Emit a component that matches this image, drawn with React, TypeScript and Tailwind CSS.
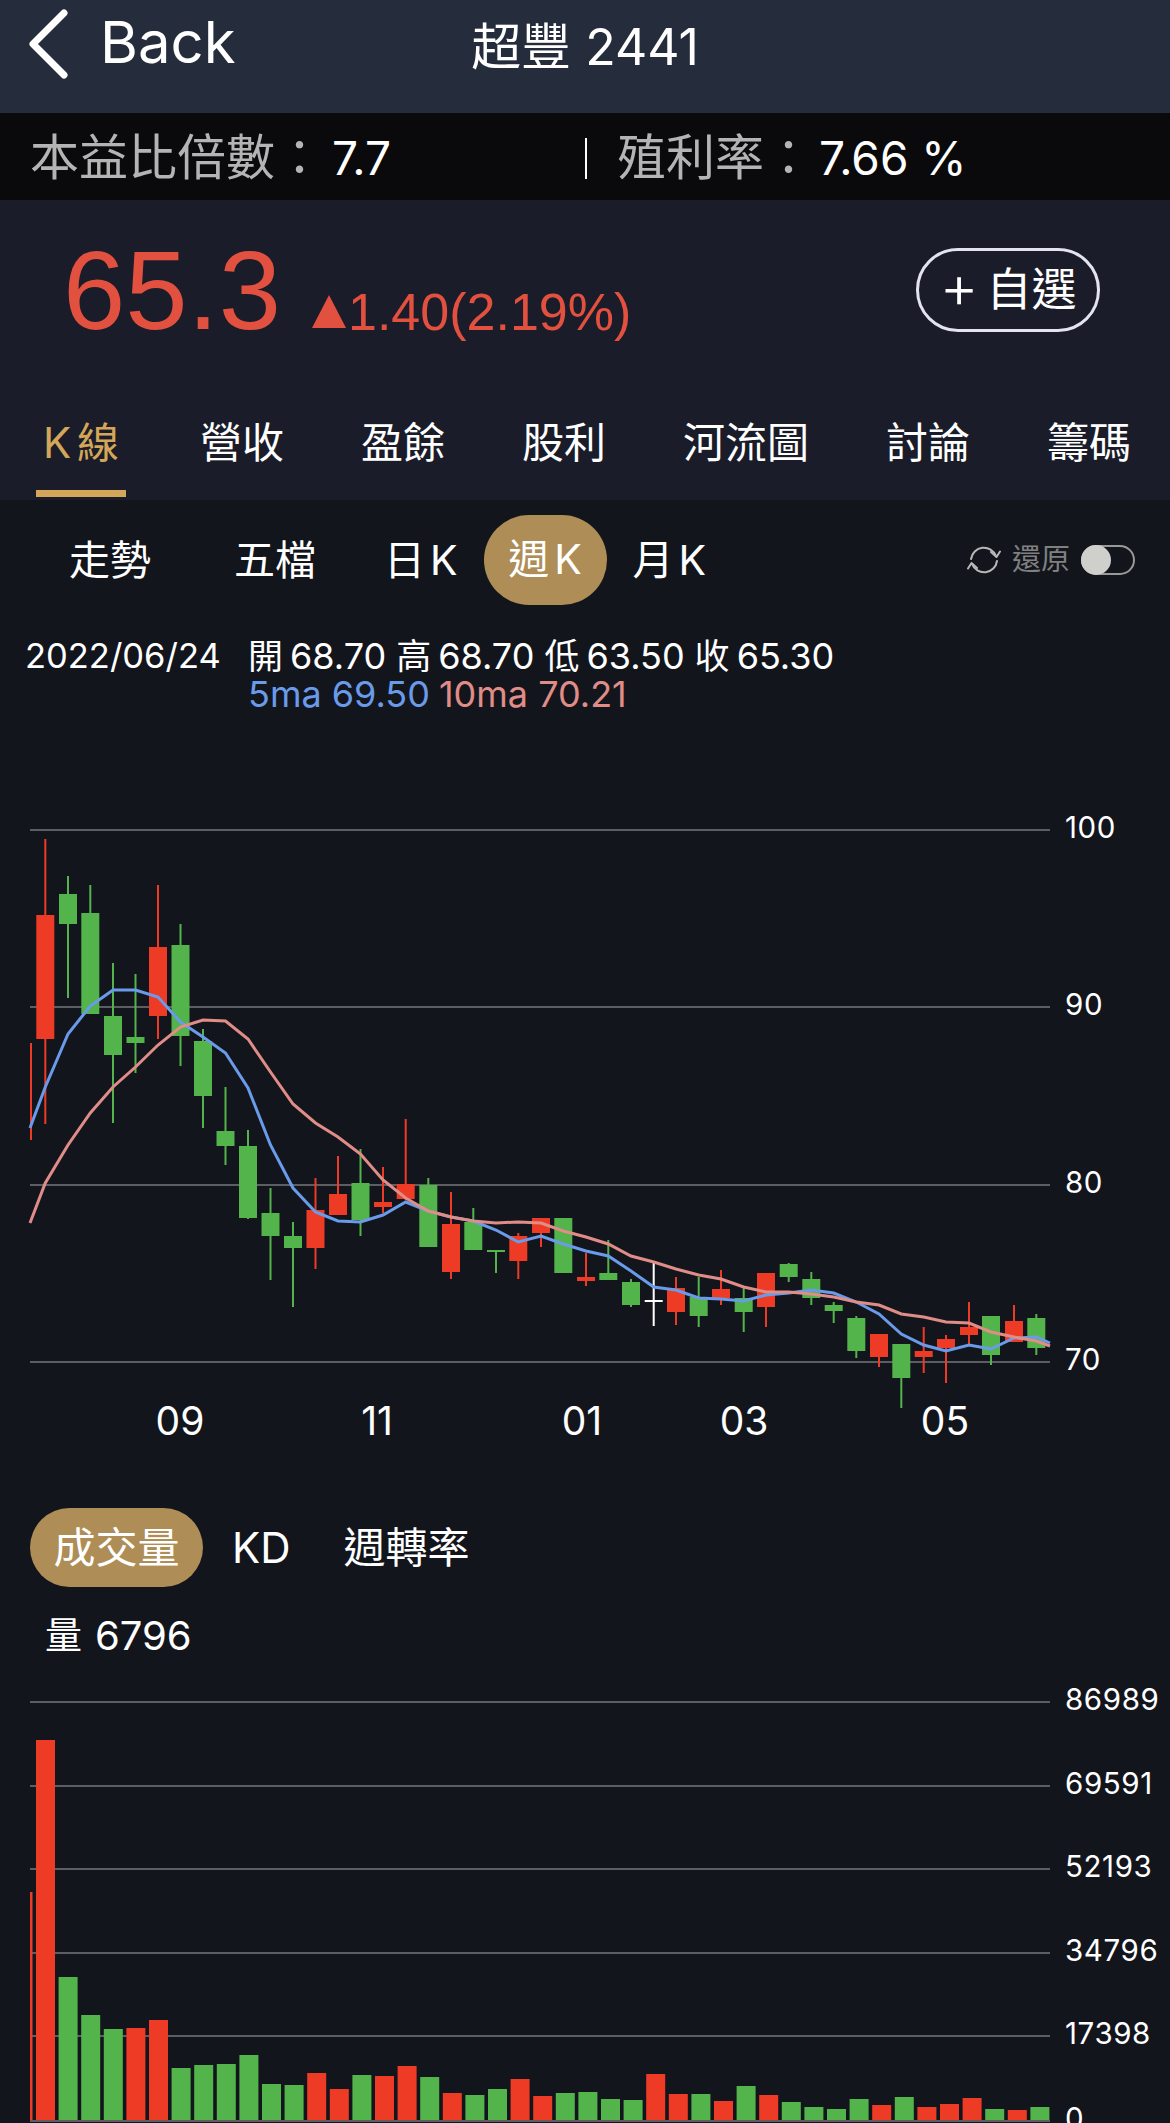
type Candle = [string, number, number, number, number, number];

const RED = '#ee3b26';
const GREEN = '#52b44b';

// color, x, wick top, wick bottom, body top, body bottom
const CANDLES: Candle[] = [
  [RED, 31, 1043, 1140, 0, 0],
  [RED, 45.3, 839, 1124, 915, 1039],
  [GREEN, 68, 876, 998, 894, 924],
  [GREEN, 90.3, 885, 1014, 913, 1014],
  [GREEN, 113, 963, 1123, 1016, 1055],
  [GREEN, 135.5, 974, 1073, 1037, 1043],
  [RED, 158, 885, 1039, 947, 1016],
  [GREEN, 180.5, 924, 1066, 945, 1036],
  [GREEN, 203, 1029, 1128, 1041, 1096],
  [GREEN, 225.5, 1087, 1165, 1131, 1146],
  [GREEN, 248, 1130, 1219, 1146, 1218],
  [GREEN, 270.5, 1188, 1280, 1213, 1236],
  [GREEN, 293, 1222, 1307, 1236, 1248],
  [RED, 315.5, 1178, 1269, 1210, 1248],
  [RED, 338, 1156, 1214, 1194, 1215],
  [GREEN, 360.5, 1149, 1236, 1183, 1220],
  [RED, 383, 1167, 1213, 1202, 1207],
  [RED, 405.7, 1119, 1200, 1184, 1199],
  [GREEN, 428.3, 1178, 1247, 1185, 1247],
  [RED, 451, 1192, 1279, 1224, 1272],
  [GREEN, 473.3, 1208, 1250, 1222, 1250],
  [GREEN, 496, 1250, 1273, 1250, 1252],
  [RED, 518.3, 1233, 1279, 1236, 1261],
  [RED, 541, 1218, 1247, 1218, 1233],
  [GREEN, 563.3, 1218, 1273, 1218, 1273],
  [RED, 586, 1253, 1286, 1277, 1281],
  [GREEN, 608.3, 1240, 1280, 1273, 1280],
  [GREEN, 631, 1279, 1307, 1282, 1305],
  ['#ffffff', 653.7, 1262, 1326, 1300, 1302],
  [RED, 676, 1277, 1325, 1288, 1312],
  [GREEN, 698.7, 1277, 1327, 1297, 1316],
  [RED, 721, 1270, 1305, 1289, 1298],
  [GREEN, 743.7, 1287, 1332, 1298, 1312],
  [RED, 766, 1273, 1327, 1273, 1307],
  [GREEN, 788.7, 1263, 1282, 1264, 1277],
  [GREEN, 811.3, 1272, 1305, 1279, 1298],
  [GREEN, 833.7, 1302, 1323, 1305, 1311],
  [GREEN, 856.3, 1316, 1358, 1318, 1351],
  [RED, 879, 1334, 1367, 1334, 1357],
  [GREEN, 901.3, 1344, 1408, 1344, 1378],
  [RED, 923.7, 1327, 1373, 1351, 1357],
  [RED, 946, 1335, 1383, 1339, 1348],
  [RED, 969, 1302, 1345, 1327, 1335],
  [GREEN, 991, 1316, 1365, 1316, 1355],
  [RED, 1014, 1305, 1342, 1321, 1342],
  [GREEN, 1036.3, 1314, 1355, 1318, 1348],
];

const MA5 =
  '30,1128 45.3,1087 68,1034 90.3,1006 113,990 135.5,990 158,997 180.5,1022 203,1037 225.5,1053 248,1088 270.5,1145 293,1188 315.5,1212 338,1221 360.5,1222 383,1215 405.7,1202 428.3,1211 451,1217 473.3,1221 496,1230 518.3,1242 541,1236 563.3,1244 586,1251 608.3,1256 631,1271 653.7,1287 676,1290 698.7,1298 721,1299 743.7,1301 766,1295 788.7,1293 811.3,1290 833.7,1293 856.3,1302 879,1314 901.3,1334 923.7,1345 946,1351 969,1345 991,1349 1014,1338 1036.3,1337 1050,1343';

const MA10 =
  '30,1223 45.3,1183 68,1145 90.3,1113 113,1087 135.5,1067 158,1045 180.5,1027 203,1020 225.5,1021 248,1039 270.5,1072 293,1104 315.5,1123 338,1137 360.5,1154 383,1180 405.7,1198 428.3,1211 451,1217 473.3,1221 496,1223 518.3,1222 541,1223 563.3,1231 586,1237 608.3,1244 631,1256 653.7,1262 676,1269 698.7,1275 721,1279 743.7,1287 766,1292 788.7,1292 811.3,1294 833.7,1297 856.3,1302 879,1305 901.3,1314 923.7,1317 946,1322 969,1323 991,1332 1014,1337 1036.3,1341 1050,1346';

const PRICE_GRID: [number, string][] = [
  [830, '100'],
  [1007, '90'],
  [1185, '80'],
  [1362, '70'],
];

const MONTHS: [number, string][] = [
  [180, '09'],
  [377, '11'],
  [582, '01'],
  [744, '03'],
  [945, '05'],
];

const VOLUME_GRID: [number, string][] = [
  [1702, '86989'],
  [1786, '69591'],
  [1869, '52193'],
  [1953, '34796'],
  [2036, '17398'],
  [2121, '0'],
];

// top of each volume bar, same x positions as the candles
const VOLUMES: [string, number][] = [
  [RED, 1740], [GREEN, 1977], [GREEN, 2015], [GREEN, 2029], [RED, 2028], [RED, 2020],
  [GREEN, 2068], [GREEN, 2065], [GREEN, 2064], [GREEN, 2055], [GREEN, 2084], [GREEN, 2085],
  [RED, 2073], [RED, 2089], [GREEN, 2075], [RED, 2076], [RED, 2066], [GREEN, 2077],
  [RED, 2093], [GREEN, 2095], [GREEN, 2089], [RED, 2079], [RED, 2096], [GREEN, 2093],
  [GREEN, 2092], [GREEN, 2099], [GREEN, 2100], [RED, 2074], [RED, 2094], [GREEN, 2094],
  [RED, 2101], [GREEN, 2086], [RED, 2095], [GREEN, 2102], [GREEN, 2107], [GREEN, 2109],
  [GREEN, 2099], [RED, 2105], [GREEN, 2097], [RED, 2107], [RED, 2104], [RED, 2098],
  [GREEN, 2109], [RED, 2110], [GREEN, 2107],
];

const TABS = ['營收', '盈餘', '股利', '河流圖', '討論', '籌碼'];

const OHLC: [string, string][] = [
  ['開', '68.70'],
  ['高', '68.70'],
  ['低', '63.50'],
  ['收', '65.30'],
];

function PriceChart() {
  return (
    <svg viewBox="0 740 1170 720" className="block h-[720px] w-[1170px]">
      {PRICE_GRID.map(([y, label]) => (
        <g key={label}>
          <line x1="30" x2="1050" y1={y} y2={y} stroke="#77777a" strokeWidth="1.5" />
          <text x="1065" y={y + 8} fontSize="29.5" letterSpacing="0.6" fill="#ffffff">{label}</text>
        </g>
      ))}
      {CANDLES.map(([color, x, wt, wb, bt, bb]) => (
        <g key={x}>
          <rect x={x - 1} y={wt} width="2" height={wb - wt} fill={color} />
          {bb > bt && <rect x={x - 9} y={bt} width="18" height={bb - bt} fill={color} />}
        </g>
      ))}
      <polyline points={MA5} fill="none" stroke="#6a9bea" strokeWidth="3" />
      <polyline points={MA10} fill="none" stroke="#e08d88" strokeWidth="3" />
      {MONTHS.map(([x, label]) => (
        <text key={label} x={x} y="1435" fontSize="39" fill="#ffffff" textAnchor="middle">{label}</text>
      ))}
    </svg>
  );
}

function VolumeChart() {
  return (
    <svg viewBox="0 1680 1170 443" className="block h-[443px] w-[1170px]">
      {VOLUME_GRID.map(([y, label]) => (
        <g key={label}>
          <line x1="30" x2="1050" y1={y} y2={y} stroke="#77777a" strokeWidth="1.5" />
          <text x="1065" y={y + 8} fontSize="29.5" letterSpacing="0.6" fill="#ffffff">{label}</text>
        </g>
      ))}
      <rect x="30" y="1892" width="2.5" height="228" fill={RED} />
      {VOLUMES.map(([color, top], i) => (
        <rect key={i} x={36 + i * 22.6} y={top} width="19" height={2120 - top} fill={color} />
      ))}
    </svg>
  );
}

function RestoreIcon() {
  return (
    <svg width="34" height="30" viewBox="0 0 34 30" fill="none" stroke="#b8b8b8" strokeWidth="2" strokeLinecap="round" strokeLinejoin="round">
      <path d="M4 14 A13 13 0 0 1 29 11" />
      <path d="M24 7 L29.5 12 L33 6.5" />
      <path d="M30 16 A13 13 0 0 1 5 19" />
      <path d="M1 23.5 L4.5 18 L10 23" />
    </svg>
  );
}

export default function App() {
  return (
    <div className="h-[2123px] w-[1170px] overflow-hidden bg-[#13151d] font-[Inter,'Noto_Sans_CJK_TC',sans-serif] text-white">
      <header className="grid h-[113px] grid-cols-3 bg-[#252c3c]">
        <div className="flex items-start pl-[28px] pt-[9px]">
          <svg width="42" height="70" viewBox="0 0 42 70" fill="none">
            <polyline points="36,4 5,35 36,66" stroke="#ffffff" strokeWidth="7" strokeLinecap="round" strokeLinejoin="round" />
          </svg>
          <span className="ml-[30px] mt-[-2px] text-[58px] leading-[70px]">Back</span>
        </div>
        <div className="col-start-2 flex justify-center pt-[19px] text-[50px] leading-[56px] whitespace-nowrap">超豐 2441</div>
      </header>

      <div className="flex h-[87px] items-center bg-[#0a0a0c] pt-[3px] text-[46px]">
        <span className="ml-[30px] w-[302px] text-[49px] text-[#b4b4b4]">本益比倍數：</span>
        <span className="w-[253px]">7.7</span>
        <span className="h-[41px] w-[2px] bg-white" />
        <span className="ml-[30px] w-[202px] text-[49px] text-[#b4b4b4]">殖利率：</span>
        <span>7.66 %</span>
      </div>

      <div className="bg-[#1a1d29]">
        <div className="flex h-[200px] items-start">
          <span className="ml-[63px] mt-[31px] font-['Liberation_Sans',sans-serif] text-[112px] leading-[120px] text-[#e2503f]">65.3</span>
          <svg width="34" height="33" viewBox="0 0 34 33" className="ml-[31px] mt-[95px]">
            <polygon points="17,0 34,33 0,33" fill="#e2503f" />
          </svg>
          <span className="ml-[2px] mt-[82px] font-['Liberation_Sans',sans-serif] text-[52px] leading-[60px] text-[#e2503f]">1.40(2.19%)</span>
          <div className="ml-auto mr-[70px] mt-[48px] flex h-[84px] w-[184px] items-center justify-center rounded-full border-[3px] border-[#e3e3f2] text-[45px]">
            <span className="mr-[8px] -mt-[8px] text-[60px] leading-[60px] font-light">+</span>
            <span>自選</span>
          </div>
        </div>
        <div className="flex h-[100px] gap-[77px] pl-[44px] text-[42px] whitespace-nowrap">
          <div className="-ml-[8px] -mr-[3px] flex flex-col items-center justify-between pt-[18px] text-[#d4a65a]">
            <span className="leading-[50px]">K<span className="ml-[6px]">線</span></span>
            <span className="mb-[3px] h-[7px] w-[90px] bg-[#d4a65a]" />
          </div>
          {TABS.map((tab) => (
            <span key={tab} className="pt-[18px] leading-[50px]">{tab}</span>
          ))}
        </div>
      </div>

      <div className="flex h-[120px] items-start pt-[15px] text-[41px] whitespace-nowrap">
        <span className="ml-[69px] leading-[90px]">走勢</span>
        <span className="ml-[83px] leading-[90px]">五檔</span>
        <span className="ml-[68px] leading-[90px]">日<span className="ml-[5px]">K</span></span>
        <span className="ml-[26px] flex h-[90px] w-[123px] items-center justify-center rounded-full bg-[#ae8d56]">週<span className="ml-[5px]">K</span></span>
        <span className="ml-[26px] leading-[90px]">月<span className="ml-[5px]">K</span></span>
        <div className="ml-auto mr-[35px] flex h-[90px] items-center">
          <RestoreIcon />
          <span className="ml-[11px] text-[29px] text-[#808080]">還原</span>
          <span className="ml-[11px] flex h-[30px] w-[54px] rounded-full border-2 border-[#999999]">
            <span className="-m-[2px] h-[30px] w-[30px] shrink-0 rounded-full bg-[#cfcfcb]" />
          </span>
        </div>
      </div>

      <div className="h-[120px] pt-[17px] leading-[38px] whitespace-nowrap">
        <div className="flex text-[36px]">
          <span className="ml-[25px] w-[223px] text-[34.5px]">2022/06/24</span>
          <span className="flex gap-[10px]">
            {OHLC.map(([label, value]) => (
              <span key={label} className="flex gap-[7px]">
                <span className="text-[35px]">{label}</span>
                <span>{value}</span>
              </span>
            ))}
          </span>
        </div>
        <div className="ml-[248px] text-[36px]">
          <span className="text-[#6a9bea]">5ma 69.50</span>
          <span className="ml-[9px] text-[#e08d88]">10ma 70.21</span>
        </div>
      </div>

      <PriceChart />

      <div className="mt-[48px] flex h-[79px] items-center text-[42px] whitespace-nowrap">
        <span className="ml-[30px] flex h-[79px] w-[173px] items-center justify-center rounded-full bg-[#ae8d56]">成交量</span>
        <span className="ml-[29px]">KD</span>
        <span className="ml-[53px]">週轉率</span>
      </div>

      <div className="flex h-[93px] items-start pl-[45px] pt-[27px] text-[40px] leading-[44px]">
        <span className="text-[37px]">量</span>
        <span className="ml-[13px]">6796</span>
      </div>

      <VolumeChart />
    </div>
  );
}
